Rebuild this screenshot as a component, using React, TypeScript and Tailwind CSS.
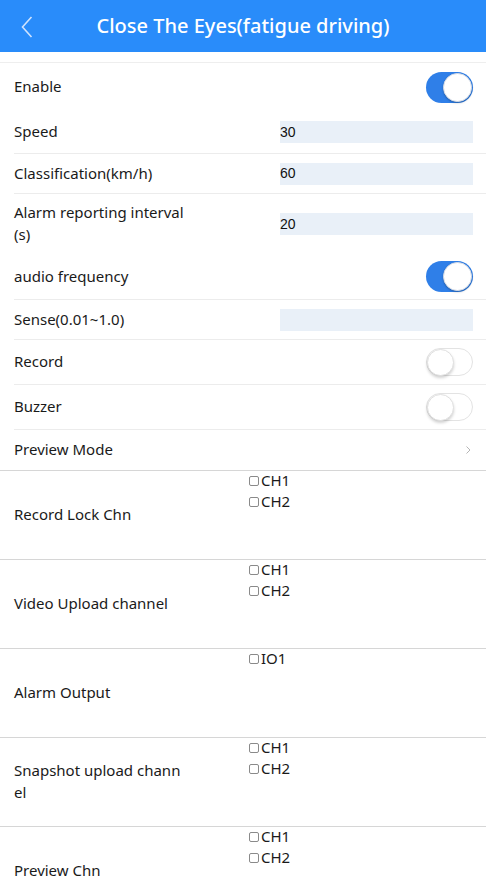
import type { ReactNode } from "react";

const font = { fontFamily: '"Noto Sans", "Open Sans", Arial, sans-serif' };

type Row =
  | { kind: "switch"; label: string; on: boolean; h: string; line?: boolean }
  | { kind: "input"; label: string; value: string; h: string; line?: boolean }
  | { kind: "link"; label: string; h: string; line?: boolean };

const rows: Row[] = [
  { kind: "switch", label: "Enable", on: true, h: "h-[48px]" },
  { kind: "input", label: "Speed", value: "30", h: "h-[43px]", line: true },
  { kind: "input", label: "Classification(km/h)", value: "60", h: "h-[40px]", line: true },
  { kind: "input", label: "Alarm reporting interval (s)", value: "20", h: "h-[60px]" },
  { kind: "switch", label: "audio frequency", on: true, h: "h-[46px]", line: true },
  { kind: "input", label: "Sense(0.01~1.0)", value: "", h: "h-[40px]", line: true },
  { kind: "switch", label: "Record", on: false, h: "h-[45px]", line: true },
  { kind: "switch", label: "Buzzer", on: false, h: "h-[45px]", line: true },
  { kind: "link", label: "Preview Mode", h: "h-[40px]" },
];

const channelRows: { label: string; options: string[] }[] = [
  { label: "Record Lock Chn", options: ["CH1", "CH2"] },
  { label: "Video Upload channel", options: ["CH1", "CH2"] },
  { label: "Alarm Output", options: ["IO1"] },
  { label: "Snapshot upload channel", options: ["CH1", "CH2"] },
  { label: "Preview Chn", options: ["CH1", "CH2"] },
];

function Toggle({ on }: { on: boolean }) {
  return on ? (
    <span className="flex h-[31px] w-[47px] items-center justify-end rounded-full bg-[#2f7fe8] pr-[1px]">
      <span className="h-[29px] w-[29px] rounded-full border border-[#d8dde6] bg-white shadow-[0_1px_2px_rgba(0,0,0,0.25)]" />
    </span>
  ) : (
    <span className="flex h-[28px] w-[47px] items-center rounded-full border border-[#e3e3e3] bg-white">
      <span className="h-[27px] w-[27px] rounded-full border border-[#e0e0e0] bg-white shadow-[0_2px_3px_rgba(0,0,0,0.18)]" />
    </span>
  );
}

function SettingRow({ row }: { row: Row }) {
  let right: ReactNode = null;
  if (row.kind === "switch") right = <Toggle on={row.on} />;
  if (row.kind === "input")
    right = (
      <span
        className="flex h-[22px] w-[193px] items-center bg-[#e9f0f8] text-[14px] text-[#111]"
        style={{ fontFamily: '"Liberation Sans", Arial, sans-serif' }}
      >
        {row.value}
      </span>
    );
  if (row.kind === "link")
    right = (
      <svg width="7" height="10" viewBox="0 0 7 10" className="mr-[1px]">
        <path d="M1.5 1.5 L5 5 L1.5 8.5" fill="none" stroke="#b5b5b5" strokeWidth="1" />
      </svg>
    );

  return (
    <div className="pl-[14px]">
      <div
        className={`flex items-center justify-between pr-[13px] ${row.h} ${
          row.line ? "border-b border-[#ececec]" : ""
        }`}
      >
        <span className="-mt-[2px] w-[180px] text-[15px] leading-[22px] text-[#1a1a1a]">{row.label}</span>
        {right}
      </div>
    </div>
  );
}

function ChannelRow({ label, options }: { label: string; options: string[] }) {
  return (
    <div className="flex h-[89px] border-b border-[#d6d6d6]">
      <div className="flex w-[249px] items-center pl-[14px]">
        <span className="-mt-[2px] w-[170px] break-all text-[15px] leading-[22px] text-[#1a1a1a]">{label}</span>
      </div>
      <div className="-mt-[1px] flex flex-col">
        {options.map((o) => (
          <label key={o} className="flex h-[21px] items-center text-[15px] text-[#1a1a1a]">
            <span className="mr-[2px] h-[10px] w-[10px] rounded-[2px] border border-[#8a8a8a] bg-white" />
            {o}
          </label>
        ))}
      </div>
    </div>
  );
}

export default function App() {
  return (
    <div className="min-h-[885px] w-[486px] bg-white" style={font}>
      <header className="relative flex h-[52px] items-center justify-center bg-[#298cfa]">
        <svg width="12" height="22" viewBox="0 0 12 22" className="absolute left-[21px] top-[16px]">
          <path d="M10.5 1 L1.5 11 L10.5 21" fill="none" stroke="#cfe3fd" strokeWidth="1.6" />
        </svg>
        <h1 className="text-[20px] font-medium text-white">Close The Eyes(fatigue driving)</h1>
      </header>
      <div className="h-[10px]" />
      <div className="border-t border-[#eeeeee]">
        {rows.map((r) => (
          <SettingRow key={r.label} row={r} />
        ))}
      </div>
      <div className="border-t border-[#d6d6d6]">
        {channelRows.map((c) => (
          <ChannelRow key={c.label} label={c.label} options={c.options} />
        ))}
      </div>
    </div>
  );
}
